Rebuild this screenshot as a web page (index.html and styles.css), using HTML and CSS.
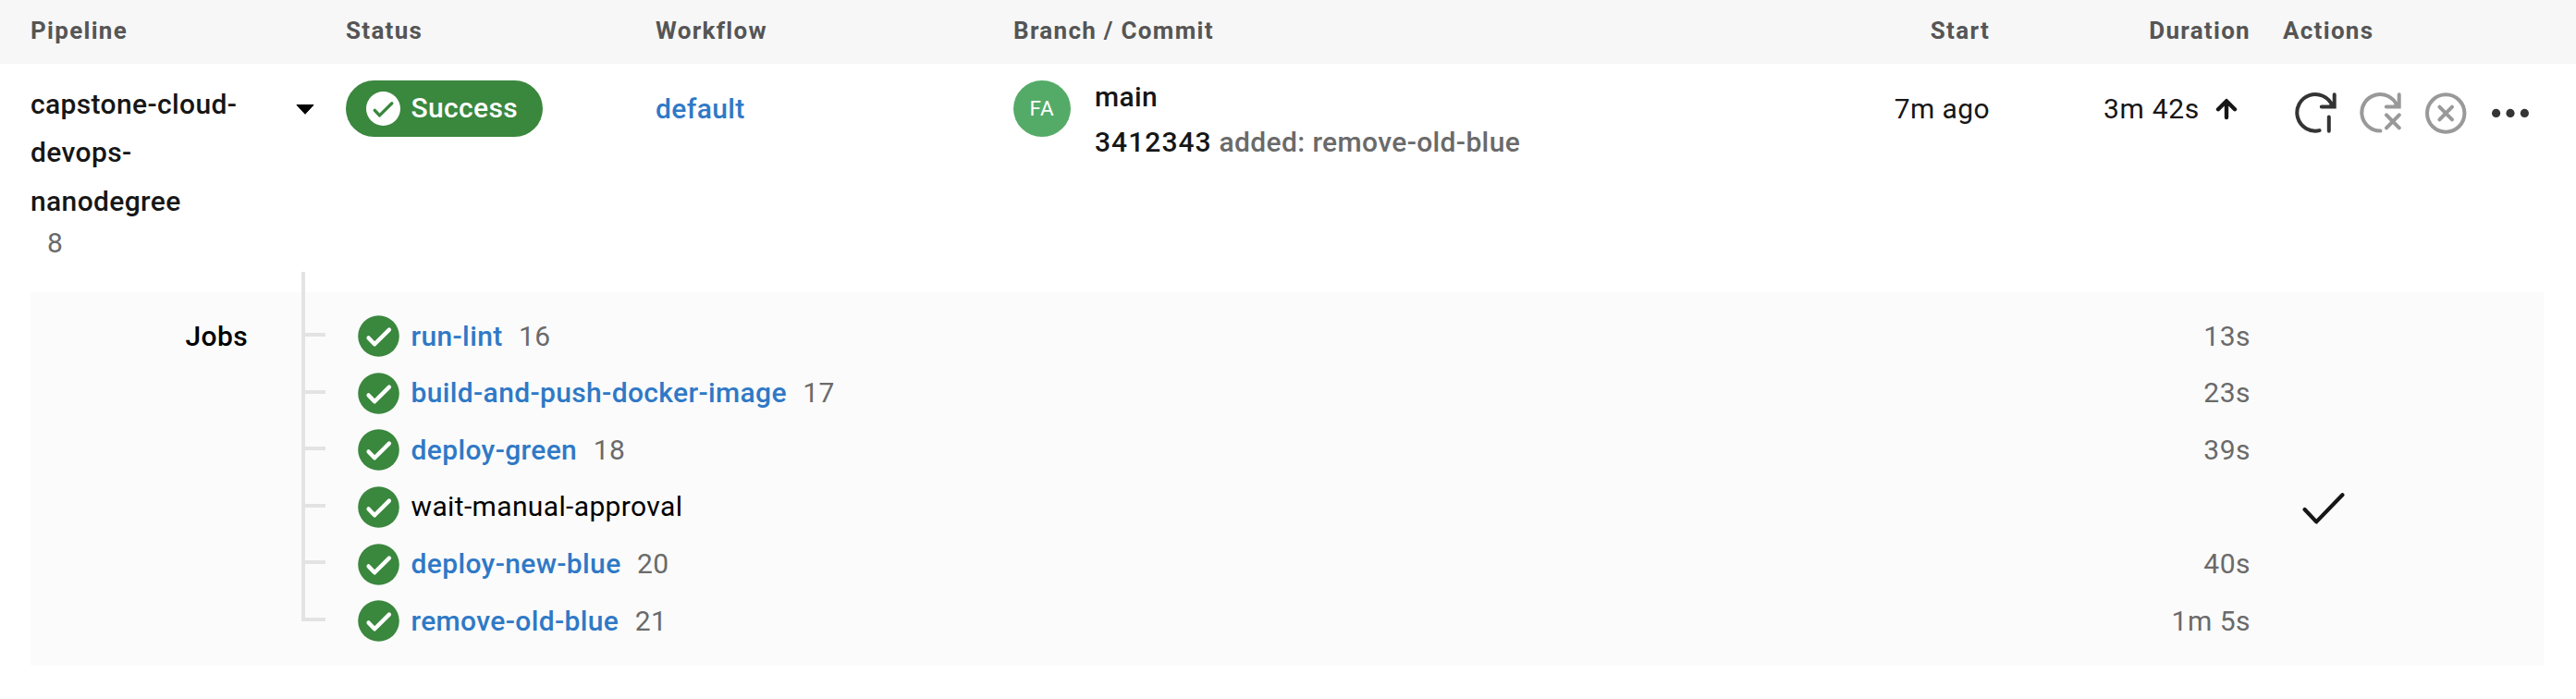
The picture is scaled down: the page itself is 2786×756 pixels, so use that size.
FILE: index.html
```html
<!DOCTYPE html>
<html lang="en">
<head>
<meta charset="utf-8">
<title>Pipelines</title>
<link rel="stylesheet" href="styles.css">
</head>
<body>
<svg class="defs" width="0" height="0" aria-hidden="true">
  <symbol id="ok" viewBox="0 0 45 45">
    <circle cx="22.5" cy="22.5" r="22.3" fill="#3a873e"/>
    <path d="M11.6 24.4l6.5 6.9 15.8-15.7" fill="none" stroke="#fff" stroke-width="4.4" stroke-linecap="round" stroke-linejoin="round"/>
  </symbol>
</svg>
<header class="row head">
  <div>Pipeline</div>
  <div>Status</div>
  <div>Workflow</div>
  <div>Branch / Commit</div>
  <div class="right">Start</div>
  <div class="right">Duration</div>
  <div class="actions-head">Actions</div>
</header>
<main>
  <section class="row pipeline">
    <div class="project">
      <div class="project-name">capstone-cloud-<br>devops-<br>nanodegree<span class="run">8</span></div>
      <svg class="caret" width="20" height="11" viewBox="0 0 20 11"><path d="M1 .5h18L10 10.3z" stroke="#000" stroke-linejoin="round"/></svg>
    </div>
    <div>
      <div class="badge">
        <svg width="37" height="37" viewBox="0 0 37 37"><circle cx="18.5" cy="18.5" r="18.5" fill="#fff"/><path d="M9.3 20.3l5.2 5.6L27.8 12.8" fill="none" stroke="#3a873e" stroke-width="3.4" stroke-linecap="round" stroke-linejoin="round"/></svg>
        <span>Success</span>
      </div>
    </div>
    <div class="line"><a class="link">default</a></div>
    <div class="commit">
      <div class="avatar">FA</div>
      <div class="commit-text">
        <div>main</div>
        <div><span class="hash">3412343</span> <span class="message">added: remove-old-blue</span></div>
      </div>
    </div>
    <div class="line time right">7m ago</div>
    <div class="line time duration">
      <span>3m 42s</span>
      <svg width="24" height="24" viewBox="0 0 24 24"><path d="M12 21V3.5M3 12.2l9-9 9 9" fill="none" stroke="#161616" stroke-width="4.4" stroke-linecap="round" stroke-linejoin="round"/></svg>
    </div>
    <div class="actions">
      <svg width="46" height="46" viewBox="0 0 46 46"><g fill="none" stroke="#343434" stroke-width="4" stroke-linecap="round"><path d="M26.6 42.1A19.8 19.8 0 1 1 40.4 15.2M42.7 3.2v13.4H28.8M36.8 27.5v15.3"/></g><path d="M36.8 14.5l5-3.5v5.5z" fill="#343434"/></svg>
      <svg width="46" height="46" viewBox="0 0 46 46"><g fill="none" stroke="#999" stroke-width="4" stroke-linecap="round"><path d="M22.4 42.6A19.8 19.8 0 1 1 40.4 15.2M42.7 3.2v13.4H28.8M29 25.3l13.8 14M42.8 25.3L29 39.3"/></g><path d="M36.8 14.5l5-3.5v5.5z" fill="#999"/></svg>
      <svg width="46" height="46" viewBox="0 0 46 46"><g fill="none" stroke="#999" stroke-width="4" stroke-linecap="round"><circle cx="23.2" cy="23.5" r="20.2"/><path d="M16.4 16.7L30 30.3M30 16.7L16.4 30.3"/></g></svg>
      <svg width="40" height="46" viewBox="0 0 40 46" fill="#343434"><circle cx="4.6" cy="23.4" r="4.6"/><circle cx="20" cy="23.4" r="4.6"/><circle cx="35.4" cy="23.4" r="4.6"/></svg>
    </div>
  </section>
  <section class="panel">
    <h2 class="jobs-title">Jobs</h2>
    <svg class="tree" width="26" height="378" viewBox="0 0 26 378"><path d="M2 0V376H26M2 68H26M2 130H26M2 191H26M2 253H26M2 314H26" fill="none" stroke="#e3e3e3" stroke-width="4"/></svg>
    <ul class="jobs">
      <li class="job"><svg class="ok"><use href="#ok"/></svg><a class="link">run-lint</a><span class="num">16</span><span class="time-spent">13s</span></li>
      <li class="job"><svg class="ok"><use href="#ok"/></svg><a class="link">build-and-push-docker-image</a><span class="num">17</span><span class="time-spent">23s</span></li>
      <li class="job"><svg class="ok"><use href="#ok"/></svg><a class="link">deploy-green</a><span class="num">18</span><span class="time-spent">39s</span></li>
      <li class="job"><svg class="ok"><use href="#ok"/></svg><span class="plain">wait-manual-approval</span><svg class="approve" width="46" height="34" viewBox="0 0 46 34"><path d="M2.6 18l12.6 13.4L43.4 2.3" fill="none" stroke="#161616" stroke-width="4.2" stroke-linecap="round" stroke-linejoin="round"/></svg></li>
      <li class="job"><svg class="ok"><use href="#ok"/></svg><a class="link">deploy-new-blue</a><span class="num">20</span><span class="time-spent">40s</span></li>
      <li class="job"><svg class="ok"><use href="#ok"/></svg><a class="link">remove-old-blue</a><span class="num">21</span><span class="time-spent">1m 5s</span></li>
    </ul>
  </section>
</main>
</body>
</html>
```

FILE: styles.css
```css
* { box-sizing: border-box; }
body {
  margin: 0;
  background: #fff;
  color: #161616;
  font: 500 30px/52.5px Roboto, sans-serif;
  letter-spacing: 0.36px;
}
.defs { display: block; }
.row {
  display: grid;
  grid-template-columns: 341px 335px 387px 756px 300px 282px 1fr;
  padding: 0 35px 0 33px;
}
.right { text-align: right; }
.head {
  height: 69px;
  background: #f7f7f7;
  color: #555;
  font-size: 26px;
  font-weight: 700;
  line-height: 66px;
  letter-spacing: 1.3px;
}
.actions-head { padding-left: 35px; }
.pipeline { height: 247px; padding-top: 18px; }
.project { display: flex; justify-content: space-between; padding: 0 34px 0 0; }
.project-name { margin-top: -0.5px; }
.run {
  display: block;
  padding-left: 18px;
  color: #6a6a6a;
  font-weight: 400;
  line-height: 38px;
}
.caret { margin-top: 26px; }
.badge {
  display: flex;
  align-items: center;
  gap: 12px;
  width: 213px;
  height: 61px;
  padding-left: 21.5px;
  border-radius: 31px;
  background: #3a873e;
  color: #fff;
}
.line { line-height: 61px; }
.link { color: #2f79c6; }
.commit { display: flex; gap: 26px; }
.avatar {
  width: 62px;
  height: 61px;
  border-radius: 50%;
  background: #54ab68;
  color: #fff;
  font-size: 22.5px;
  font-weight: 400;
  line-height: 61px;
  letter-spacing: 1px;
  text-align: center;
}
.commit-text { line-height: 49px; margin-top: -7px; }
.hash { letter-spacing: 1.05px; }
.message { color: #6a6a6a; }
.time { font-weight: 400; letter-spacing: 0.4px; }
.duration { display: flex; justify-content: flex-end; gap: 17px; padding-right: 14px; letter-spacing: 0.7px; }
.duration svg { margin-top: 19px; }
.actions { display: flex; gap: 24px; padding: 12px 0 0 48px; }
.actions svg:last-child { margin-left: 3px; }
.panel {
  display: grid;
  grid-template-columns: 235px 84px 1fr;
  width: 2718px;
  height: 404px;
  margin-left: 33px;
  background: #fbfbfb;
}
.jobs-title {
  margin: 21.5px 0 0;
  color: #000;
  font-size: 30px;
  font-weight: 500;
  text-align: right;
}
.tree { margin: -22px 0 0 58px; }
.jobs { margin: 0; padding: 17px 0 0 35px; list-style: none; }
.job { display: flex; align-items: center; height: 61.6px; }
.ok { width: 45px; height: 45px; margin-right: 12.5px; }
.num { margin-left: 17.5px; color: #6a6a6a; font-weight: 400; }
.plain { color: #000; font-weight: 400; }
.time-spent { margin-left: auto; padding-right: 317px; color: #6a6a6a; font-weight: 400; letter-spacing: 0.5px; }
.approve { margin: 2px 215px 0 auto; }
```
